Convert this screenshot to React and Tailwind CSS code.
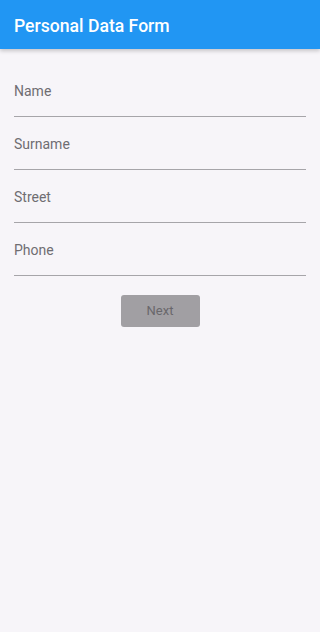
export default function App() {
  const fields = ["Name", "Surname", "Street", "Phone"];
  return (
    <div className="w-[320px] h-[632px] bg-[#f7f5f9] flex flex-col" style={{ fontFamily: "Roboto, 'Liberation Sans', sans-serif" }}>
      <div className="h-[49px] bg-[#2196f3] flex items-center px-[14px] pt-[3px] shadow-[0_2px_4px_rgba(0,0,0,0.2)] shrink-0">
        <span className="text-white text-[17.6px] font-medium">Personal Data Form</span>
      </div>
      <div className="flex flex-col px-[14px] pt-[15px]">
        {fields.map((f) => (
          <div key={f} className="pt-[17px] pb-[14px] border-b border-[#a6a5a9] h-[53px]">
            <div className="text-[14px] leading-[20px] text-[#6f6d72]">{f}</div>
          </div>
        ))}
        <div className="flex justify-center mt-[19px]">
          <button className="w-[79px] h-[32px] rounded-[3px] bg-[#a19fa3] text-[#69676b] text-[13px] flex items-center justify-center">
            Next
          </button>
        </div>
      </div>
    </div>
  );
}
